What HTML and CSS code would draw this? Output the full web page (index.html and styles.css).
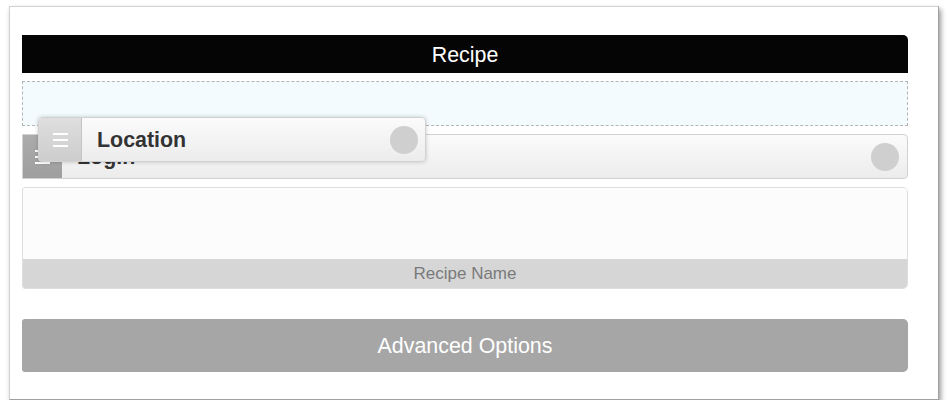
FILE: index.html
```html
<!DOCTYPE html>
<html>
<head>
<meta charset="utf-8">
<link rel="stylesheet" href="styles.css">
</head>
<body>
<div class="frame">
  <div class="content">
    <div class="header">Recipe</div>
    <div class="placeholder"></div>
    <div class="row login">
      <div class="handle"><span class="bars"><i></i><i></i><i></i></span></div>
      <div class="label">Login</div>
      <div class="dot"></div>
    </div>
    <div class="card">
      <div class="card-body"></div>
      <div class="card-foot">Recipe Name</div>
    </div>
    <div class="button">Advanced Options</div>
  </div>
  <div class="row dragging">
    <div class="handle light"><span class="bars"><i></i><i></i><i></i></span></div>
    <div class="label">Location</div>
    <div class="dot"></div>
  </div>
</div>
</body>
</html>
```
FILE: styles.css
```css
html, body { margin: 0; padding: 0; background: #fff; }
body { font-family: "Liberation Sans", Arial, sans-serif; }
.frame {
  position: relative;
  margin: 6px 0 0 9px;
  width: 930px;
  height: 394px;
  box-sizing: border-box;
  border: 1px solid #d2d2d2;
  border-right-color: #a0a0a0;
  border-bottom-color: #a0a0a0;
  box-shadow: 2px 3px 5px rgba(0,0,0,0.4);
  background: #fff;
  padding: 28px 0 0 12px;
}
.content {
  width: 886px;
  display: flex;
  flex-direction: column;
}
.header {
  height: 38px;
  box-sizing: border-box;
  padding-top: 2px;
  background: #050505;
  color: #fff;
  font-size: 21.4px;
  line-height: 36px;
  text-align: center;
  border-radius: 0 5px 0 0;
}
.placeholder {
  margin-top: 8px;
  height: 45px;
  box-sizing: border-box;
  border: 1px dashed #b4b4b4;
  background: #f3fbfe;
}
.row {
  display: flex;
  align-items: center;
  height: 45px;
  box-sizing: border-box;
  border: 1px solid #d2d2d2;
  border-radius: 0 4px 4px 0;
  background: linear-gradient(#fbfbfb, #ececec);
}
.login { margin-top: 8px; }
.handle {
  align-self: stretch;
  width: 39px;
  background: linear-gradient(#ababab, #9f9f9f);
  display: flex;
  align-items: center;
  justify-content: center;
}
.handle.light {
  width: 42px;
  background: linear-gradient(#dedede, #cdcdcd);
  border-right: 1px solid #c4c4c4;
  border-radius: 3px 0 0 3px;
}
.bars { display: flex; flex-direction: column; gap: 4px; width: 15px; }
.bars i { display: block; height: 2px; background: #fff; }
.label {
  flex: 1;
  font-size: 21.4px;
  font-weight: bold;
  color: #333;
  padding-left: 15px;
}
.dragging .label { margin-top: 1px; }
.login .label { margin-top: 2px; }
.dot {
  width: 28px;
  height: 28px;
  border-radius: 50%;
  background: #cfcfcf;
  margin-right: 8px;
}
.card {
  margin-top: 8px;
  height: 102px;
  box-sizing: border-box;
  border: 1px solid #dedede;
  border-radius: 3px 5px 5px 3px;
  overflow: hidden;
  display: flex;
  flex-direction: column;
}
.card-body { flex: 1; background: #fcfcfc; }
.card-foot {
  height: 29px;
  box-sizing: border-box;
  padding-top: 1px;
  background: #d6d6d6;
  color: #7a7a7a;
  font-size: 17px;
  line-height: 28px;
  text-align: center;
}
.button {
  margin-top: 30px;
  height: 53px;
  box-sizing: border-box;
  padding-top: 1px;
  background: #a6a6a6;
  color: #fff;
  font-size: 21.4px;
  line-height: 52px;
  text-align: center;
  border-radius: 3px 5px 5px 3px;
}
.dragging {
  position: absolute;
  left: 28px;
  top: 110px;
  width: 388px;
  border-radius: 4px;
  box-shadow: 0 0 4px rgba(0,0,0,0.2);
}
.dragging .dot { margin-right: 7px; }
```
